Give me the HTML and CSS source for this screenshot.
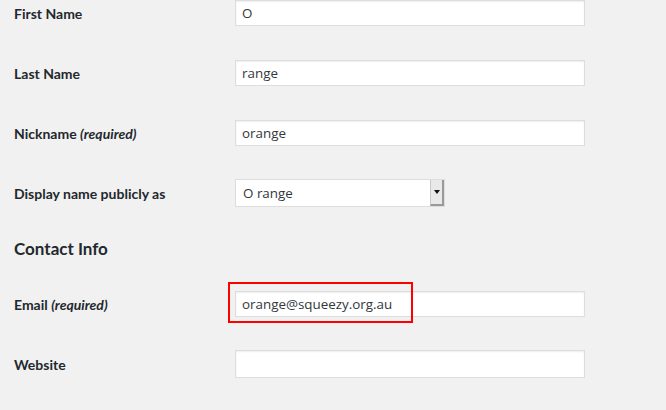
FILE: index.html
```html
<!DOCTYPE html>
<html>
<head>
<meta charset="utf-8">
<link rel="stylesheet" href="styles.css">
</head>
<body>
<div class="page">
  <div class="row r1">
    <div class="label">First Name</div>
    <div class="field"><div class="input">O</div></div>
  </div>
  <div class="row">
    <div class="label">Last Name</div>
    <div class="field"><div class="input">range</div></div>
  </div>
  <div class="row">
    <div class="label">Nickname <span class="desc">(required)</span></div>
    <div class="field"><div class="input">orange</div></div>
  </div>
  <div class="row rsel">
    <div class="label">Display name publicly as</div>
    <div class="field">
      <div class="select">
        <span class="sel-text">O range</span>
        <span class="sel-btn"><span class="tri"></span></span>
      </div>
    </div>
  </div>
  <h2 class="heading">Contact Info</h2>
  <div class="row remail">
    <div class="label">Email <span class="desc">(required)</span></div>
    <div class="field">
      <div class="input">orange@squeezy.org.au</div>
      <div class="highlight"></div>
    </div>
  </div>
  <div class="row rweb">
    <div class="label">Website</div>
    <div class="field"><div class="input tall"></div></div>
  </div>
</div>
</body>
</html>
```
FILE: styles.css
```css
html, body {
  margin: 0;
  padding: 0;
  background: #f1f1f1;
}
.page {
  padding-left: 14px;
  font-family: "Lato", "Noto Sans", sans-serif;
  color: #23282d;
}
.row {
  display: flex;
  align-items: center;
  height: 26px;
  margin-bottom: 34px;
}
.label {
  width: 221px;
  font-size: 14px;
  font-weight: 700;
}
.desc {
  font-style: italic;
  font-weight: 700;
  font-size: 14px;
}
.field {
  position: relative;
}
.input {
  box-sizing: border-box;
  width: 350px;
  height: 26px;
  background: #fff;
  border: 1px solid #ddd;
  box-shadow: inset 0 1px 2px rgba(0,0,0,0.07);
  font-family: "Open Sans", "Noto Sans", sans-serif;
  font-size: 13.4px;
  color: #32373c;
  padding: 0 6px;
  line-height: 24px;
}
.input.tall {
  height: 28px;
}
.rsel {
  height: 28px;
  margin-top: -1px;
}
.select {
  box-sizing: border-box;
  width: 210px;
  height: 28px;
  background: #fff;
  border: 1px solid #ddd;
  display: flex;
  align-items: stretch;
  font-family: "Open Sans", "Noto Sans", sans-serif;
  font-size: 13.4px;
  color: #32373c;
}
.sel-text {
  flex: 1;
  padding-left: 7px;
  line-height: 26px;
}
.sel-btn {
  width: 11px;
  background: #e9e9e9;
  border-left: 1px solid #c8c8c8;
  border-right: 2px solid #9a9a9a;
  border-bottom: 2px solid #9a9a9a;
  display: flex;
  align-items: center;
  justify-content: center;
}
.tri {
  width: 0;
  height: 0;
  border-left: 3px solid transparent;
  border-right: 3px solid transparent;
  border-top: 4px solid #111;
}
.heading {
  margin: 0;
  font-size: 17px;
  font-weight: 700;
  line-height: 22px;
  margin-top: -3px;
  margin-bottom: 31px;
}
.remail {
  margin-bottom: 33px;
}
.rweb {
  height: 28px;
}
.highlight {
  position: absolute;
  left: -7px;
  top: -9px;
  width: 185px;
  height: 41px;
  box-sizing: border-box;
  border: 2px solid #ff0000;
}
```
